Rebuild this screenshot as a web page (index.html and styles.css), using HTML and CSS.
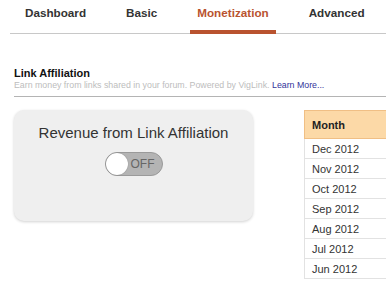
FILE: index.html
```html
<!DOCTYPE html>
<html>
<head>
  <title>Monetization</title>
  <link rel="stylesheet" href="styles.css">
</head>
<body>
  <div class="tabs">
    <div class="tab">Dashboard</div>
    <div class="tab">Basic</div>
    <div class="tab active">Monetization</div>
    <div class="tab">Advanced</div>
  </div>

  <div class="section">
    <h3>Link Affiliation</h3>
    <p class="desc">Earn money from links shared in your forum. Powered by VigLink. <a href="#">Learn More...</a></p>
  </div>

  <div class="content">
    <div class="card">
      <div class="card-title">Revenue from Link Affiliation</div>
      <div class="switch">
        <span class="knob"></span>
        <span class="switch-label">OFF</span>
      </div>
    </div>

    <table class="months">
      <tr><th>Month</th><th></th></tr>
      <tr><td>Dec 2012</td><td></td></tr>
      <tr><td>Nov 2012</td><td></td></tr>
      <tr><td>Oct 2012</td><td></td></tr>
      <tr><td>Sep 2012</td><td></td></tr>
      <tr><td>Aug 2012</td><td></td></tr>
      <tr><td>Jul 2012</td><td></td></tr>
      <tr><td>Jun 2012</td><td></td></tr>
    </table>
  </div>
</body>
</html>
```

FILE: styles.css
```css
body {
  margin: 0;
  padding: 0;
  background-color: #fff;
  font-family: "Liberation Sans", Arial, sans-serif;
  color: #333;
  overflow: hidden;
}

.tabs {
  display: flex;
  gap: 26px;
  margin-left: 10px;
  padding-left: 8px;
  border-bottom: 1px solid #c8c8c8;
  height: 33px;
}

.tab {
  padding: 6px 7px 0 7px;
  font-size: 11.7px;
  font-weight: bold;
  color: #333;
  height: 24px;
  border-bottom: 4px solid transparent;
  margin-bottom: -1px;
  white-space: nowrap;
}

.tab.active {
  color: #b9532f;
  border-bottom-color: #b9532f;
}

.section {
  margin: 0 0 0 14px;
  padding-top: 33px;
  border-bottom: 1px solid #b4b4b4;
  padding-bottom: 6px;
}

h3 {
  margin: 0;
  font-size: 11px;
  font-weight: bold;
  color: #111;
}

.desc {
  margin: 1px 0 0;
  font-size: 8.8px;
  color: #bdbdbd;
}

.desc a {
  color: #33339a;
  text-decoration: none;
}

.content {
  display: flex;
  align-items: flex-start;
  width: 500px;
  padding: 13px 0 0 14px;
  gap: 51px;
}

.card {
  flex-shrink: 0;
  width: 239px;
  height: 111px;
  box-sizing: border-box;
  background-color: #efefef;
  border-radius: 10px;
  box-shadow: 0 1px 3px rgba(0,0,0,0.18);
  display: flex;
  flex-direction: column;
  align-items: center;
  padding-top: 14px;
}

.card-title {
  font-size: 15px;
  color: #333;
  white-space: nowrap;
}

.switch {
  margin-top: 11px;
  width: 58px;
  height: 24px;
  box-sizing: border-box;
  border: 1px solid #9a9a9a;
  border-radius: 12px;
  background-color: #b4b4b4;
  display: flex;
  align-items: center;
  gap: 3px;
}

.knob {
  width: 22px;
  height: 22px;
  border-radius: 50%;
  background-color: #fff;
  box-shadow: 0 0 1px rgba(0,0,0,0.4);
}

.switch-label {
  font-size: 12px;
  color: #666;
}

.months {
  border-collapse: collapse;
  font-size: 11px;
  flex-shrink: 0;
}

.months th {
  background-color: #fcd9a7;
  border: 1px solid #f0bf85;
  height: 27px;
  text-align: left;
  padding: 0 7px;
  width: 67px;
  color: #222;
}

.months th + th {
  width: 60px;
}

.months td {
  border: 1px solid #e2e2e2;
  height: 19px;
  padding: 0 7px;
  color: #333;
}
```
